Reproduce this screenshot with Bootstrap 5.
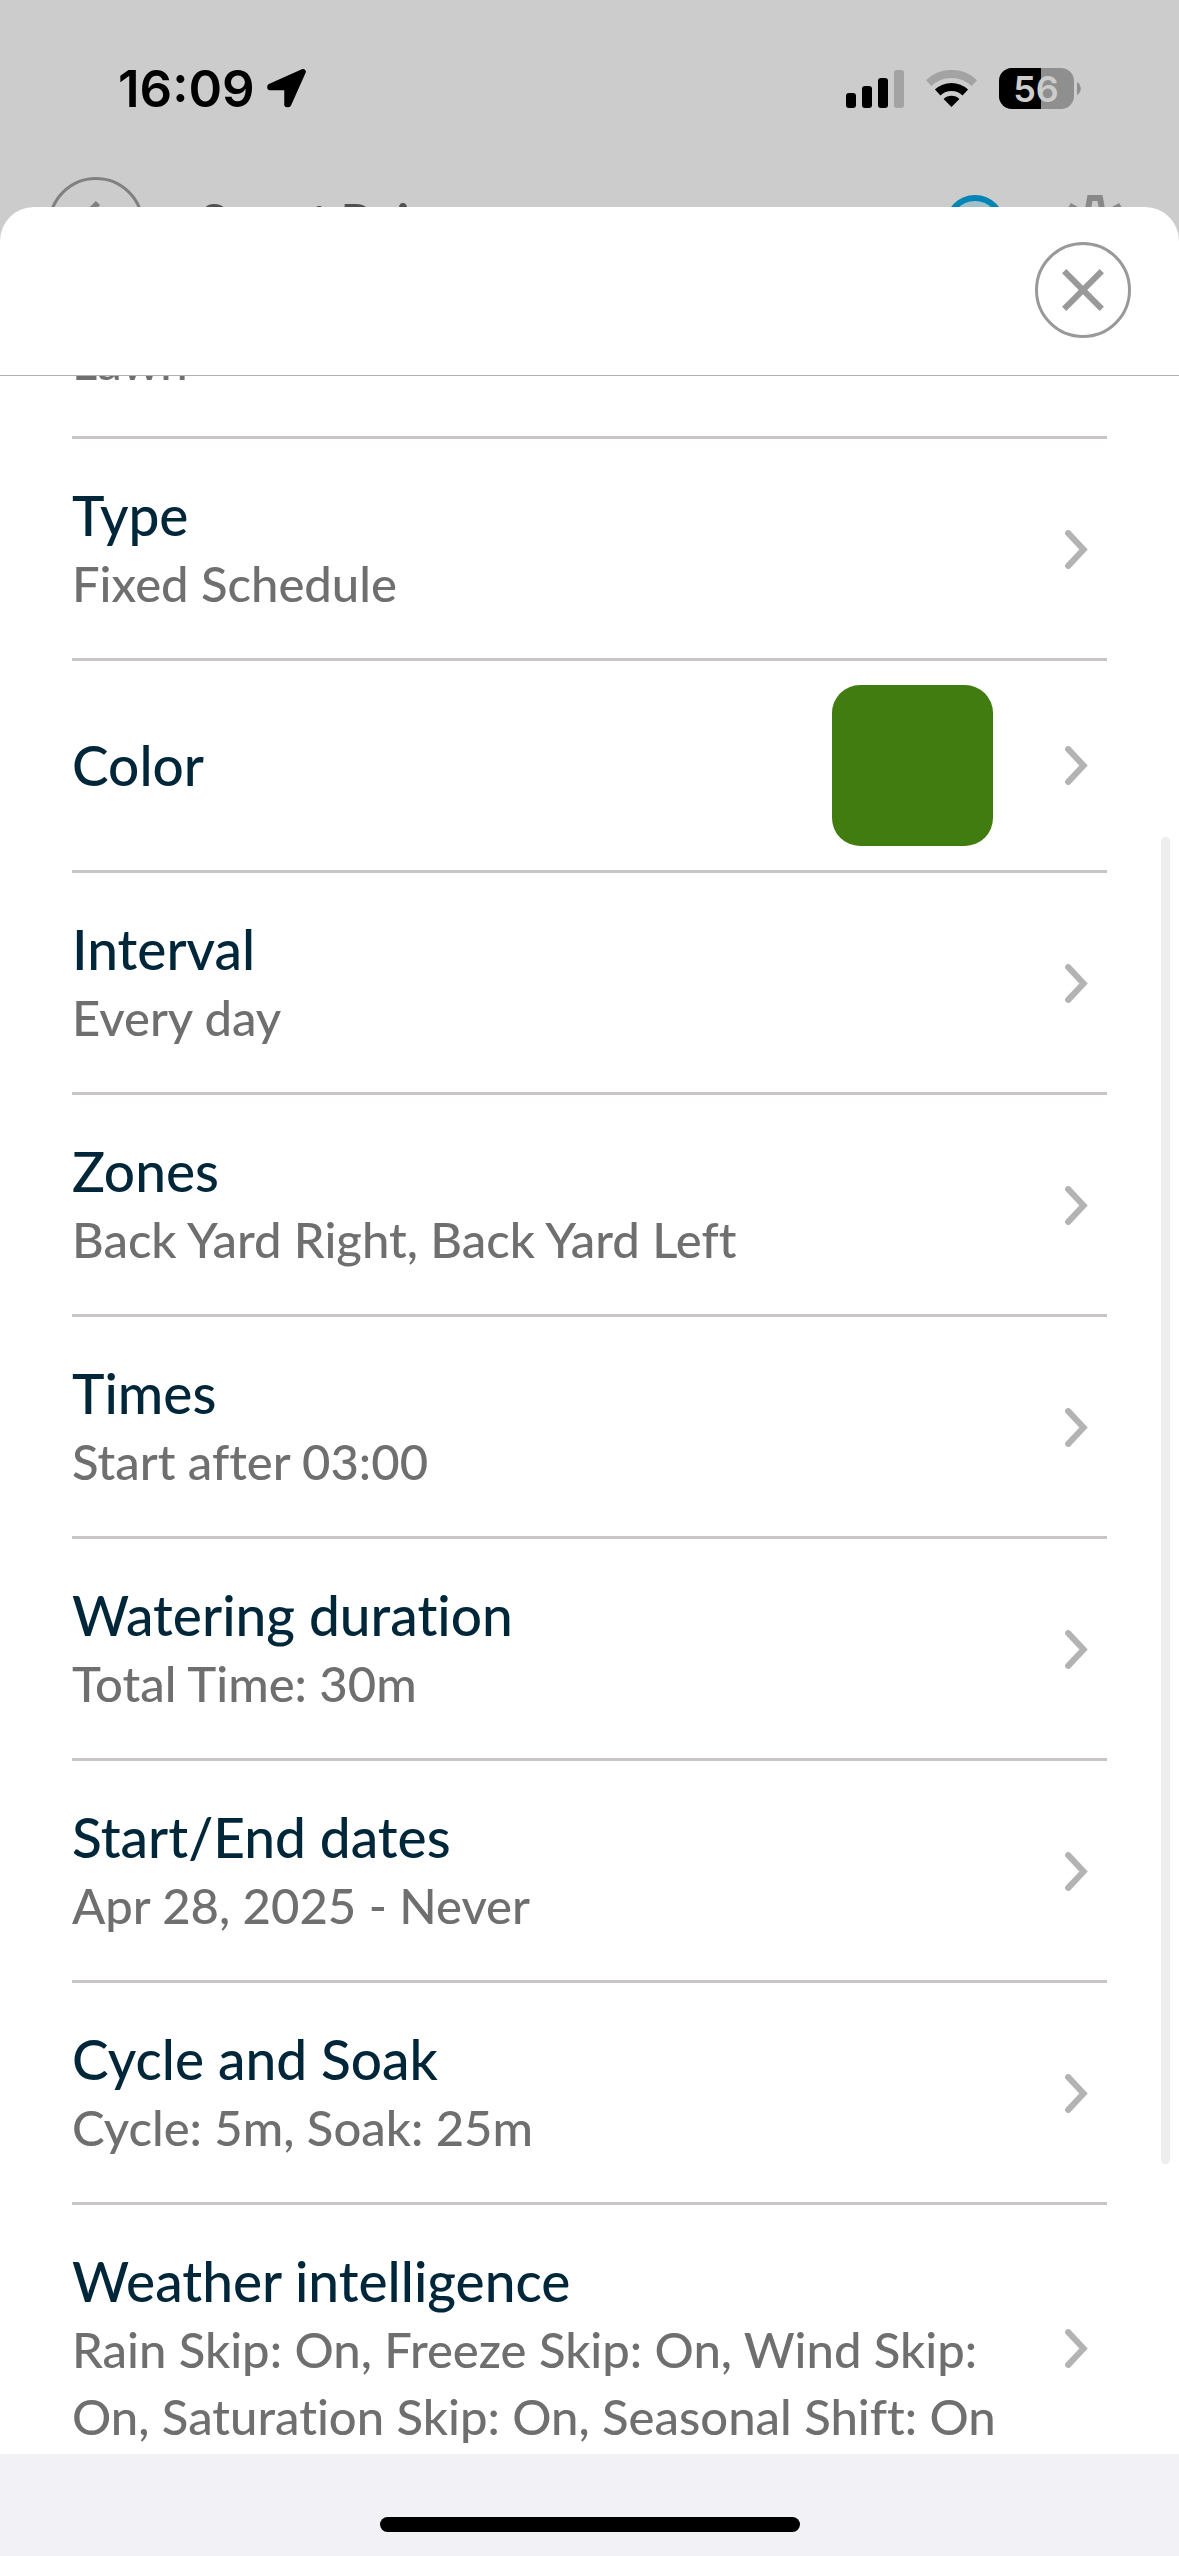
<!DOCTYPE html>
<html lang="en">
<head>
<meta charset="utf-8">
<meta name="viewport" content="width=device-width, initial-scale=1">
<title>Schedule settings</title>
<link href="https://cdn.jsdelivr.net/npm/bootstrap@5.3.0/dist/css/bootstrap.min.css" rel="stylesheet">
<style>
  body { background: #ccc; font-family: Lato, "Liberation Sans", sans-serif; font-variant-ligatures: none; }
  svg { display: block; flex: none; }

  .status-bar { height: 177px; padding: 0 98px 0 118px; color: #000; }
  .status-clock { gap: 12px; }
  .status-icons { gap: 22px; }
  .status-time { font: 600 51px/56px Inter, "Liberation Sans", sans-serif; }
  .battery-level { font: 600 36px Inter, "Liberation Sans", sans-serif; }

  .app-bar { height: 96px; padding: 0 54px 0 48px; }
  .app-actions { gap: 60px; }
  .app-title { font-size: 49px; line-height: 60px; font-weight: 700; color: #505052; margin-left: 56px; padding-bottom: 8px; }

  .sheet { margin-top: -66px; background: #fff; border-radius: 34px 34px 0 0; min-height: 0; }
  .sheet-head { height: 169px; padding: 0 48px 2px; border-bottom: 1px solid #b3b3b3; }
  .close-btn { width: 96px; height: 96px; padding: 0; border: 3px solid #999; border-radius: 50%; background: #fff; }
  .sheet-body { min-height: 0; overflow: hidden; }

  .settings { padding: 0 72px; margin-top: -48px; }
  .setting { display: flex; align-items: center; gap: 48px; padding: 42px 19px 41px 0; border-bottom: 3px solid #c9c5c6; text-decoration: none; }
  .setting-first { padding-top: 0; }
  .setting-swatch { padding-top: 24px; padding-bottom: 24px; gap: 72px; }
  .setting:last-child { border-bottom: 0; }
  .setting-name { font-size: 55px; line-height: 69px; font-weight: 500; color: #00263a; }
  .setting-value { font-size: 49px; line-height: 67px; font-weight: 500; color: #6f6f70; }
  .swatch { width: 161px; height: 161px; border-radius: 28px; background: #407c0f; }

  .scroll-thumb { position: absolute; right: 9px; top: 461px; width: 9px; height: 1327px; border-radius: 5px; background: #eee; }
  .home-area { height: 102px; padding-bottom: 24px; background: #f2f1f6; }
  .home-indicator { width: 420px; height: 15px; border-radius: 8px; background: #000; }
</style>
</head>
<body class="vh-100 overflow-hidden d-flex flex-column">

<svg class="d-none" aria-hidden="true">
  <symbol id="chevron" viewBox="0 0 23 39">
    <path d="M3.200 3.200 18.500 19.500 3.200 35.800" fill="none" stroke="#b3b3b3" stroke-width="6.200" stroke-linecap="round"/>
  </symbol>
</svg>

<div class="status-bar d-flex align-items-center flex-shrink-0">
  <div class="status-clock d-flex align-items-center me-auto">
    <span class="status-time">16:09</span>
    <svg width="39" height="39" viewBox="0 0 39 39" aria-label="Location in use">
      <path d="M36 2.800 3 17.500 V18.500 H20 V35.500 H21.500 Z" fill="#000" stroke="#000" stroke-width="5.500" stroke-linejoin="round"/>
    </svg>
  </div>
  <div class="status-icons d-flex align-items-center">
    <svg width="58" height="38" viewBox="0 0 58 38" aria-label="Signal">
      <rect x="0" y="23" width="10" height="15" rx="3"/>
      <rect x="16" y="16" width="10" height="22" rx="3"/>
      <rect x="32" y="8" width="10" height="30" rx="3"/>
      <rect x="48" y="0" width="10" height="38" rx="3" fill="#a3a3a3"/>
    </svg>
    <svg width="51" height="38" viewBox="0 0 51 38" aria-label="Wi-Fi">
      <path d="M2.700 13.100A33 33 0 0 1 48.300 13.100" fill="none" stroke="#a3a3a3" stroke-width="8"/>
      <path d="M11.700 22.500A20 20 0 0 1 39.300 22.500" fill="none" stroke="#000" stroke-width="8"/>
      <path d="M25.500 37 17.600 29A11.500 11.500 0 0 1 33.400 29Z"/>
    </svg>
    <svg width="82" height="41" viewBox="0 0 82 41" aria-label="Battery">
      <rect width="75" height="41" rx="13" fill="#8f8f8f"/>
      <path d="M13 0H42V41H13A13 13 0 0 1 0 28V13A13 13 0 0 1 13 0Z"/>
      <path d="M78 14C83 17 83 24 78 27Z" fill="#8f8f8f"/>
      <text class="battery-level" x="37" y="34" text-anchor="middle" fill="#ccc">56</text>
    </svg>
  </div>
</div>

<div class="app-bar d-flex align-items-center flex-shrink-0">
  <svg width="96" height="96" viewBox="0 0 96 96" aria-label="Back" fill="none" stroke="#808080">
    <circle cx="48" cy="48" r="46.500" stroke-width="3"/>
    <path d="M50 26 28 48 50 70M28 48H70" stroke-width="6"/>
  </svg>
  <div class="app-title me-auto">Smart Rain</div>
  <div class="app-actions d-flex align-items-center">
    <svg width="60" height="60" viewBox="0 0 60 60" aria-hidden="true">
      <circle cx="30" cy="30" r="27" fill="#a3c0ca" stroke="#0085b5" stroke-width="6"/>
    </svg>
    <svg width="60" height="60" viewBox="0 0 60 60" aria-hidden="true" fill="none" stroke="#888" stroke-width="6">
      <path d="M25 3H35L37 14 44 17 53 12 58 21 50 27V33L58 39 53 48 44 43 37 46 35 57H25L23 46 16 43 7 48 2 39 10 33V27L2 21 7 12 16 17 23 14Z"/>
      <circle cx="30" cy="30" r="8"/>
    </svg>
  </div>
</div>

<main class="sheet d-flex flex-column flex-grow-1 position-relative">
  <div class="sheet-head d-flex align-items-center justify-content-end flex-shrink-0">
    <button type="button" class="close-btn d-flex align-items-center justify-content-center" aria-label="Close">
      <svg width="42" height="42" viewBox="0 0 42 42"><path d="M2.200 2.200 39.800 39.800M39.800 2.200 2.200 39.800" stroke="#999" stroke-width="6"/></svg>
    </button>
  </div>

  <div class="sheet-body flex-grow-1 position-relative">
    <nav class="settings d-flex flex-column">
      <a href="#" class="setting setting-first">
        <span class="setting-value flex-grow-1">Lawn</span>
      </a>
      <a href="#" class="setting">
        <span class="d-flex flex-column flex-grow-1"><span class="setting-name">Type</span><span class="setting-value">Fixed Schedule</span></span>
        <svg width="23" height="39"><use href="#chevron"/></svg>
      </a>
      <a href="#" class="setting setting-swatch">
        <span class="setting-name flex-grow-1">Color</span>
        <span class="swatch"></span>
        <svg width="23" height="39"><use href="#chevron"/></svg>
      </a>
      <a href="#" class="setting">
        <span class="d-flex flex-column flex-grow-1"><span class="setting-name">Interval</span><span class="setting-value">Every day</span></span>
        <svg width="23" height="39"><use href="#chevron"/></svg>
      </a>
      <a href="#" class="setting">
        <span class="d-flex flex-column flex-grow-1"><span class="setting-name">Zones</span><span class="setting-value">Back Yard Right, Back Yard Left</span></span>
        <svg width="23" height="39"><use href="#chevron"/></svg>
      </a>
      <a href="#" class="setting">
        <span class="d-flex flex-column flex-grow-1"><span class="setting-name">Times</span><span class="setting-value">Start after 03:00</span></span>
        <svg width="23" height="39"><use href="#chevron"/></svg>
      </a>
      <a href="#" class="setting">
        <span class="d-flex flex-column flex-grow-1"><span class="setting-name">Watering duration</span><span class="setting-value">Total Time: 30m</span></span>
        <svg width="23" height="39"><use href="#chevron"/></svg>
      </a>
      <a href="#" class="setting">
        <span class="d-flex flex-column flex-grow-1"><span class="setting-name">Start/End dates</span><span class="setting-value">Apr 28, 2025 - Never</span></span>
        <svg width="23" height="39"><use href="#chevron"/></svg>
      </a>
      <a href="#" class="setting">
        <span class="d-flex flex-column flex-grow-1"><span class="setting-name">Cycle and Soak</span><span class="setting-value">Cycle: 5m, Soak: 25m</span></span>
        <svg width="23" height="39"><use href="#chevron"/></svg>
      </a>
      <a href="#" class="setting">
        <span class="d-flex flex-column flex-grow-1"><span class="setting-name">Weather intelligence</span><span class="setting-value">Rain Skip: On, Freeze Skip: On, Wind Skip: On, Saturation Skip: On, Seasonal Shift: On</span></span>
        <svg width="23" height="39"><use href="#chevron"/></svg>
      </a>
    </nav>
    <div class="scroll-thumb"></div>
  </div>
</main>

<footer class="home-area d-flex align-items-end justify-content-center flex-shrink-0">
  <div class="home-indicator"></div>
</footer>

<script src="https://cdn.jsdelivr.net/npm/bootstrap@5.3.0/dist/js/bootstrap.bundle.min.js"></script>
</body>
</html>
